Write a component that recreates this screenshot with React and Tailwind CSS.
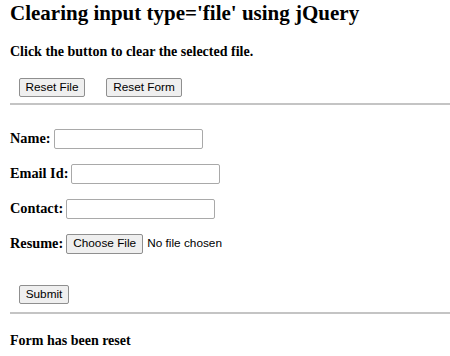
import { useState } from "react";

const btn =
  "h-[19px] px-[4px] whitespace-nowrap bg-[#efefef] border border-[#8f8f8f] rounded-[2px] text-[11.8px] leading-none text-black font-['Liberation_Sans',Arial,sans-serif]";

const field =
  "h-[20px] w-[149px] border border-[#a9a9a9] rounded-[2px] bg-white px-1 text-[12px] outline-none";

const App = () => {
  const [status, setStatus] = useState("Form has been reset");
  const [values, setValues] = useState({ name: "", email: "", contact: "" });

  const resetForm = () => {
    setValues({ name: "", email: "", contact: "" });
    setStatus("Form has been reset");
  };

  const rows = [
    { key: "name", label: "Name:" },
    { key: "email", label: "Email Id:" },
    { key: "contact", label: "Contact:" },
  ];

  return (
    <div className="w-[450px] h-[356px] overflow-hidden bg-white pl-[10px] font-['Liberation_Serif','Times_New_Roman',serif] text-black">
      <h2 className="pt-[1px] text-[21px] font-bold leading-[24px]">
        Clearing input type='file' using jQuery
      </h2>
      <p className="mt-[19px] text-[14px] font-bold leading-[16px]">
        Click the button to clear the selected file.
      </p>

      {/* Buttons */}
      <div className="mt-[18px] ml-[9px] flex gap-[21px]">
        <button className={`${btn} w-[66px]`} onClick={() => setStatus("File has been reset")}>
          Reset File
        </button>
        <button className={`${btn} w-[76px]`} onClick={resetForm}>
          Reset Form
        </button>
      </div>

      <hr className="mt-[6px] border-t-[2px] border-[#c4c4c4]" />

      {/* Form */}
      <form className="pt-[24px]" onSubmit={(e) => e.preventDefault()}>
        {rows.map((row) => (
          <div key={row.key} className="flex items-center h-[20px] mb-[15px]">
            <label className="text-[14.3px] font-bold mr-[3px]">{row.label}</label>
            <input
              className={field}
              value={values[row.key]}
              onChange={(e) => setValues({ ...values, [row.key]: e.target.value })}
            />
          </div>
        ))}
        <div className="flex items-center h-[20px]">
          <label className="text-[14.3px] font-bold mr-[3px]">Resume:</label>
          <button type="button" className={`${btn} h-[20px] w-[77px]`}>
            Choose File
          </button>
          <span className="ml-[4px] text-[11.8px] font-['Liberation_Sans',Arial,sans-serif]">
            No file chosen
          </span>
        </div>

        <div className="mt-[31px] ml-[9px] flex">
          <button type="submit" className={`${btn} w-[50px]`}>
            Submit
          </button>
        </div>
      </form>

      <hr className="mt-[8px] border-t-[2px] border-[#c4c4c4]" />

      <p className="mt-[19px] text-[14px] font-bold leading-[16px]">{status}</p>
    </div>
  );
};

export default App;
